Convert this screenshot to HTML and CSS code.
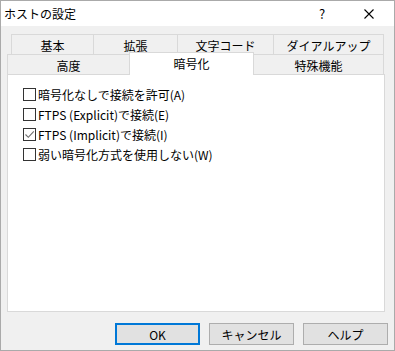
FILE: index.html
```html
<!DOCTYPE html>
<html lang="ja">
<head>
  <meta charset="UTF-8">
  <title>ホストの設定</title>
  <link rel="stylesheet" href="styles.css">
</head>
<body>
  <div class="window">
    <div class="titlebar">
      <span class="title">ホストの設定</span>
      <span class="help-btn">?</span>
      <span class="close-btn">
        <svg width="10" height="10" viewBox="0 0 10 10">
          <path d="M0.5 0.5 L9.5 9.5 M9.5 0.5 L0.5 9.5" stroke="#000" stroke-width="1.1" fill="none"/>
        </svg>
      </span>
    </div>

    <div class="tabs">
      <div class="tab-row row1">
        <div class="tab w82">基本</div>
        <div class="tab w84">拡張</div>
        <div class="tab w96">文字コード</div>
        <div class="tab w110 last">ダイアルアップ</div>
      </div>
      <div class="tab-row row2">
        <div class="tab w122">高度</div>
        <div class="tab w124 active">暗号化</div>
        <div class="tab w130 last">特殊機能</div>
      </div>
    </div>

    <div class="panel">
      <label class="check-row"><span class="box"></span>暗号化なしで接続を許可(A)</label>
      <label class="check-row"><span class="box"></span>FTPS (Explicit)で接続(E)</label>
      <label class="check-row"><span class="box">
        <svg width="11" height="11" viewBox="0 0 11 11">
          <path d="M1.5 5.5 L4.3 8.3 L9.8 2.3" stroke="#6e6e6e" stroke-width="1.1" fill="none"/>
        </svg>
      </span>FTPS (Implicit)で接続(I)</label>
      <label class="check-row"><span class="box"></span>弱い暗号化方式を使用しない(W)</label>
    </div>

    <div class="buttons">
      <button class="btn default">OK</button>
      <button class="btn">キャンセル</button>
      <button class="btn">ヘルプ</button>
    </div>
  </div>
</body>
</html>
```

FILE: styles.css
```css
* {
  margin: 0;
  padding: 0;
  box-sizing: border-box;
}

body {
  font-family: "Noto Sans CJK JP", "Noto Sans", sans-serif;
  font-size: 12px;
  color: #000;
  background: #f0f0f0;
}

.window {
  width: 395px;
  height: 351px;
  border: 1px solid #aaaaaa;
  background: #f0f0f0;
  display: flex;
  flex-direction: column;
}

.titlebar {
  height: 25px;
  background: #fff;
  display: flex;
  align-items: center;
  padding-left: 3px;
}

.title {
  flex: 1;
  font-size: 12px;
}

.help-btn {
  width: 46px;
  text-align: center;
  font-size: 13px;
  margin-right: 1px;
}

.close-btn {
  width: 46px;
  height: 25px;
  display: flex;
  align-items: center;
  justify-content: center;
  margin-right: 2px;
}

.tabs {
  margin-top: 8px;
}

.tab-row {
  display: flex;
  height: 20px;
}

.row1 {
  margin-left: 10px;
}

.row2 {
  margin-left: 6px;
}

.tab {
  height: 20px;
  border-top: 1px solid #d9d9d9;
  border-left: 1px solid #d9d9d9;
  background: #f0f0f0;
  display: flex;
  align-items: center;
  justify-content: center;
  padding-top: 1px;
}

.tab.last {
  border-right: 1px solid #d9d9d9;
}

.tab.active {
  background: #fff;
  height: 23px;
  margin-top: -2px;
  margin-bottom: -1px;
  border-right: 1px solid #d9d9d9;
  position: relative;
  z-index: 1;
  padding-top: 0;
  padding-bottom: 2px;
}

.tab.active + .tab {
  border-left: none;
}

.w82 { width: 82px; }
.w84 { width: 84px; }
.w96 { width: 96px; }
.w110 { width: 111px; }
.w122 { width: 122px; }
.w124 { width: 125px; }
.w130 { width: 130px; }

.panel {
  margin-left: 6px;
  width: 378px;
  height: 238px;
  background: #fff;
  border: 1px solid #d9d9d9;
  padding: 9px 0 0 15px;
  display: flex;
  flex-direction: column;
}

.check-row {
  height: 20px;
  display: flex;
  align-items: center;
  gap: 2px;
}

.box {
  width: 13px;
  height: 13px;
  border: 1px solid #333;
  background: #fff;
  display: flex;
  align-items: center;
  justify-content: center;
}

.buttons {
  display: flex;
  justify-content: flex-end;
  gap: 9px;
  padding-right: 6px;
  margin-top: 11px;
}

.btn {
  width: 85px;
  height: 22px;
  background: #e1e1e1;
  border: 1px solid #adadad;
  font-family: "Noto Sans CJK JP", "Noto Sans", sans-serif;
  font-size: 12px;
  color: #000;
}

.btn.default {
  border: 2px solid #0078d7;
}
```
